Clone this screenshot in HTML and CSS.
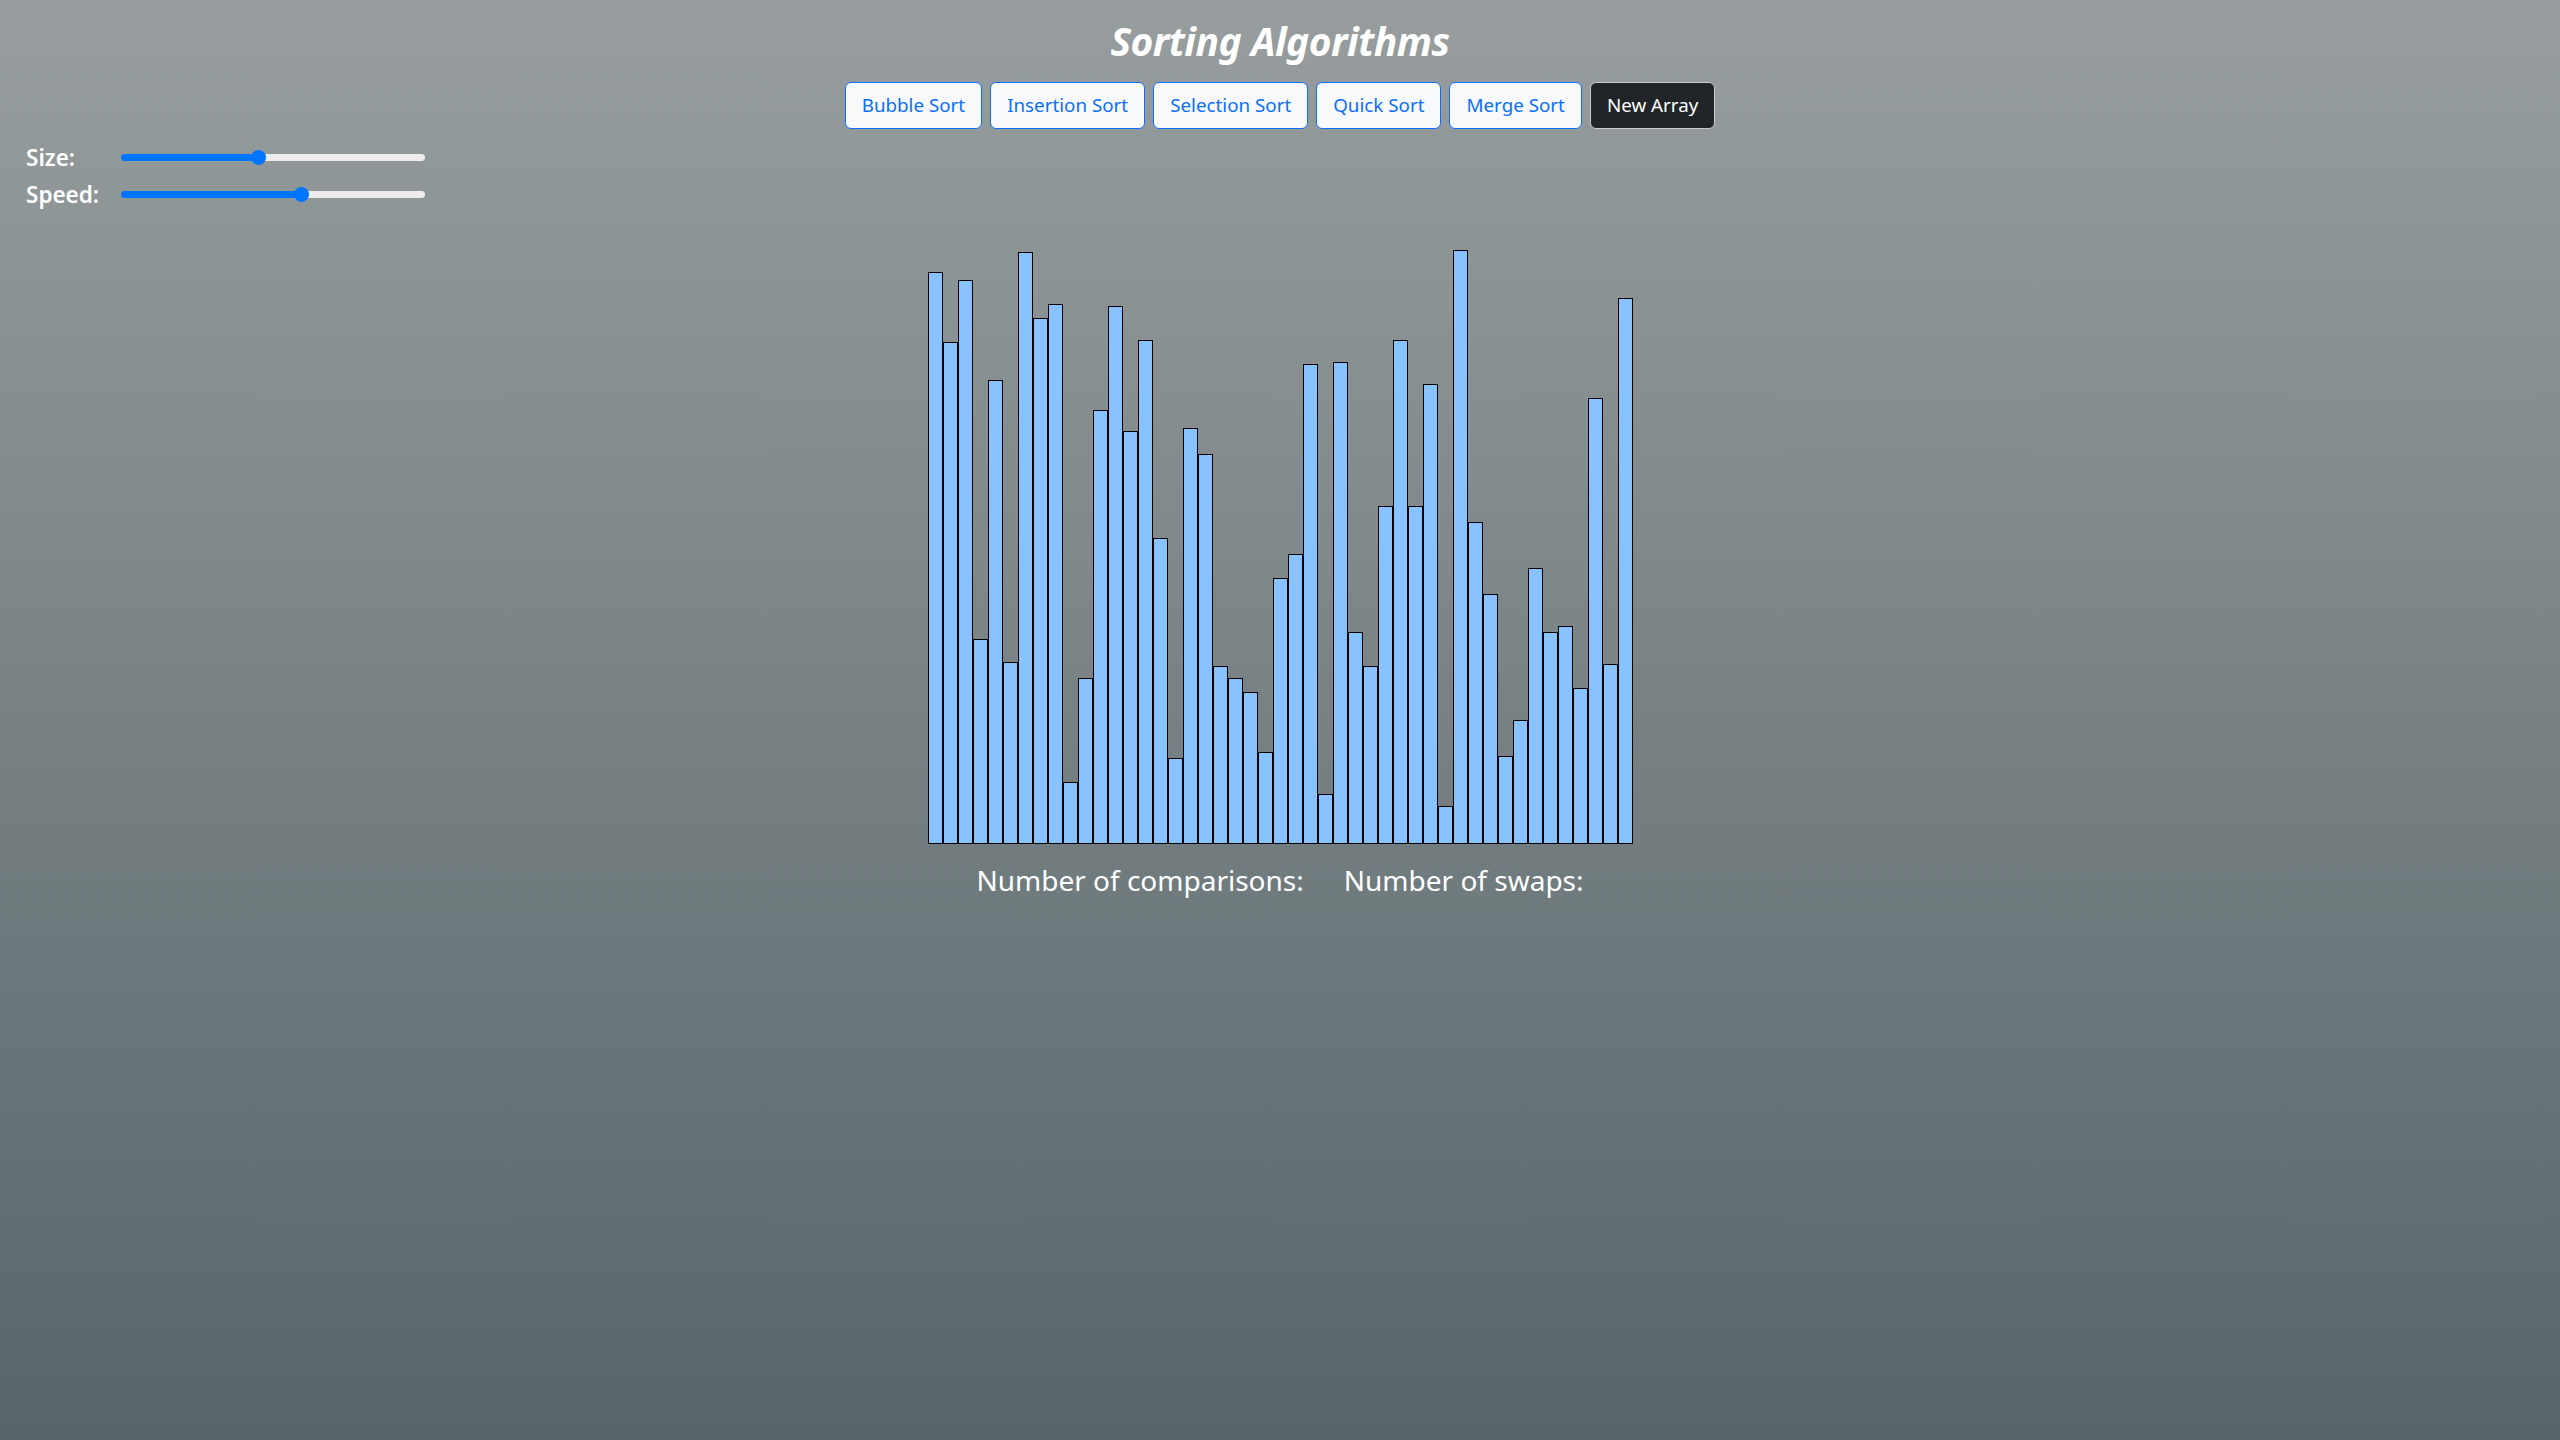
FILE: index.html
```html
<!DOCTYPE html>
<html lang="en">
<head>
<meta charset="utf-8">
<title>Sorting Algorithms</title>
<link rel="stylesheet" href="styles.css">
</head>
<body>
<div class="page">
  <h1 class="title">Sorting Algorithms</h1>
  <div class="toolbar">
    <button class="btn btn-algo">Bubble Sort</button>
    <button class="btn btn-algo">Insertion Sort</button>
    <button class="btn btn-algo">Selection Sort</button>
    <button class="btn btn-algo">Quick Sort</button>
    <button class="btn btn-algo">Merge Sort</button>
    <button class="btn btn-dark">New Array</button>
  </div>
  <div class="controls">
    <div class="control-row">
      <label class="control-label" for="size">Size:</label>
      <input class="slider" id="size" type="range" min="0" max="100" value="45" style="--fill: 45.2%">
    </div>
    <div class="control-row">
      <label class="control-label" for="speed">Speed:</label>
      <input class="slider" id="speed" type="range" min="0" max="100" value="60" style="--fill: 59.5%">
    </div>
  </div>
  <div class="chart">
    <div class="bar" style="height:572px"></div>
    <div class="bar" style="height:502px"></div>
    <div class="bar" style="height:564px"></div>
    <div class="bar" style="height:205px"></div>
    <div class="bar" style="height:464px"></div>
    <div class="bar" style="height:182px"></div>
    <div class="bar" style="height:592px"></div>
    <div class="bar" style="height:526px"></div>
    <div class="bar" style="height:540px"></div>
    <div class="bar" style="height:62px"></div>
    <div class="bar" style="height:166px"></div>
    <div class="bar" style="height:434px"></div>
    <div class="bar" style="height:538px"></div>
    <div class="bar" style="height:413px"></div>
    <div class="bar" style="height:504px"></div>
    <div class="bar" style="height:306px"></div>
    <div class="bar" style="height:86px"></div>
    <div class="bar" style="height:416px"></div>
    <div class="bar" style="height:390px"></div>
    <div class="bar" style="height:178px"></div>
    <div class="bar" style="height:166px"></div>
    <div class="bar" style="height:152px"></div>
    <div class="bar" style="height:92px"></div>
    <div class="bar" style="height:266px"></div>
    <div class="bar" style="height:290px"></div>
    <div class="bar" style="height:480px"></div>
    <div class="bar" style="height:50px"></div>
    <div class="bar" style="height:482px"></div>
    <div class="bar" style="height:212px"></div>
    <div class="bar" style="height:178px"></div>
    <div class="bar" style="height:338px"></div>
    <div class="bar" style="height:504px"></div>
    <div class="bar" style="height:338px"></div>
    <div class="bar" style="height:460px"></div>
    <div class="bar" style="height:38px"></div>
    <div class="bar" style="height:594px"></div>
    <div class="bar" style="height:322px"></div>
    <div class="bar" style="height:250px"></div>
    <div class="bar" style="height:88px"></div>
    <div class="bar" style="height:124px"></div>
    <div class="bar" style="height:276px"></div>
    <div class="bar" style="height:212px"></div>
    <div class="bar" style="height:218px"></div>
    <div class="bar" style="height:156px"></div>
    <div class="bar" style="height:446px"></div>
    <div class="bar" style="height:180px"></div>
    <div class="bar" style="height:546px"></div>
  </div>
  <div class="stats">
    <span class="stat">Number of comparisons:</span>
    <span class="stat">Number of swaps:</span>
  </div>
</div>
</body>
</html>
```
FILE: styles.css
```css
html, body {
  margin: 0;
  padding: 0;
}

body {
  min-height: 100vh;
  background: linear-gradient(to bottom, #989e9f 0%, #57656a 100%);
  font-family: "Noto Sans", "Open Sans", sans-serif;
  color: #fff;
}

.page {
  display: flex;
  flex-direction: column;
  align-items: center;
}

.title {
  margin: 17px 0 0;
  font-size: 39px;
  line-height: 48px;
  font-style: italic;
  font-weight: 700;
  color: #fff;
  letter-spacing: -0.5px;
}

.toolbar {
  display: flex;
  gap: 8px;
  margin-top: 17px;
}

.btn {
  font-family: "Noto Sans", "Open Sans", sans-serif;
  font-size: 18.8px;
  line-height: 29px;
  padding: 8px 16px;
  border-radius: 6px;
  cursor: pointer;
}

.btn-algo {
  background: #f8f9fa;
  color: #0d6efd;
  border: 1px solid #0d6efd;
}

.btn-dark {
  background: #212529;
  color: #fff;
  border: 1px solid #c8cbcd;
}

.controls {
  align-self: stretch;
  display: flex;
  flex-direction: column;
  gap: 7px;
  padding: 13px 0 0 26px;
}

.control-row {
  display: flex;
  align-items: center;
  height: 30px;
}

.control-label {
  width: 95px;
  font-size: 22.5px;
  font-weight: 600;
  color: #fff;
}

.slider {
  -webkit-appearance: none;
  appearance: none;
  margin: 0;
  width: 304px;
  height: 7px;
  border-radius: 4px;
  background: linear-gradient(to right, #0075ff 0%, #0075ff var(--fill), #ececec var(--fill), #ececec 100%);
  outline: none;
}

.slider::-webkit-slider-thumb {
  -webkit-appearance: none;
  appearance: none;
  width: 15px;
  height: 15px;
  border-radius: 50%;
  background: #0075ff;
  border: none;
}

.chart {
  display: flex;
  align-items: flex-end;
  height: 600px;
  margin-top: 35px;
}

.bar {
  box-sizing: border-box;
  width: 15px;
  background: #88c2ff;
  border: 1px solid #000;
}

.stats {
  display: flex;
  gap: 40px;
  margin-top: 16px;
}

.stat {
  font-size: 28px;
  line-height: 40px;
  color: #fff;
}
```
